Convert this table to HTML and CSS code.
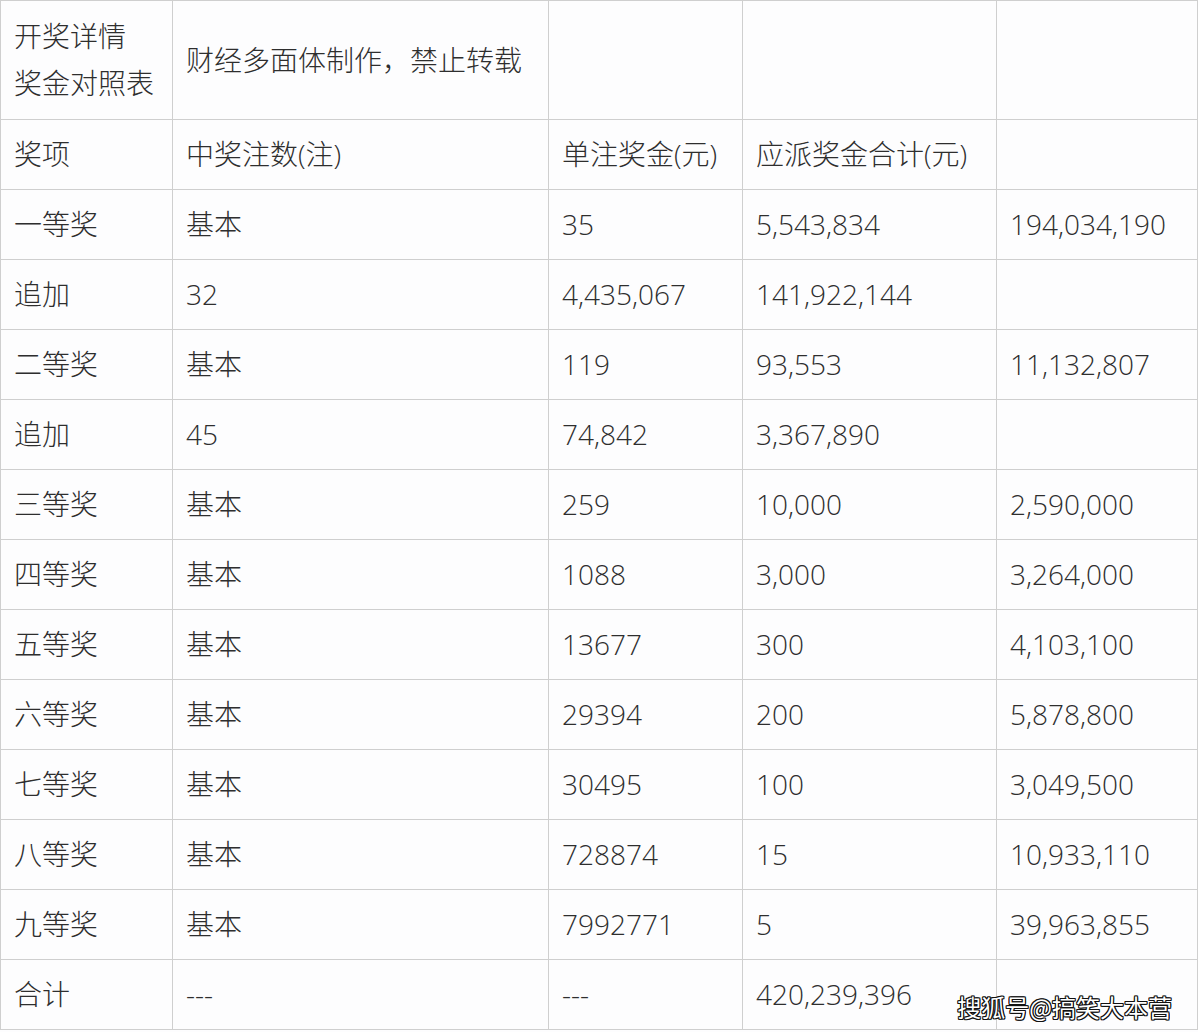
FILE: index.html
```html
<!DOCTYPE html>
<html lang="zh-CN">
<head>
<meta charset="utf-8">
<title>开奖详情</title>
<link rel="stylesheet" href="styles.css">
</head>
<body>
<div class="wrap">
<table class="prize">
  <colgroup>
    <col class="c1"><col class="c2"><col class="c3"><col class="c4"><col class="c5">
  </colgroup>
  <tr class="head">
    <td>开奖详情<br>奖金对照表</td>
    <td>财经多面体制作，禁止转载</td>
    <td></td><td></td><td></td>
  </tr>
  <tr><td>奖项</td><td>中奖注数(注)</td><td>单注奖金(元)</td><td>应派奖金合计(元)</td><td></td></tr>
  <tr><td>一等奖</td><td>基本</td><td>35</td><td>5,543,834</td><td>194,034,190</td></tr>
  <tr><td>追加</td><td>32</td><td>4,435,067</td><td>141,922,144</td><td></td></tr>
  <tr><td>二等奖</td><td>基本</td><td>119</td><td>93,553</td><td>11,132,807</td></tr>
  <tr><td>追加</td><td>45</td><td>74,842</td><td>3,367,890</td><td></td></tr>
  <tr><td>三等奖</td><td>基本</td><td>259</td><td>10,000</td><td>2,590,000</td></tr>
  <tr><td>四等奖</td><td>基本</td><td>1088</td><td>3,000</td><td>3,264,000</td></tr>
  <tr><td>五等奖</td><td>基本</td><td>13677</td><td>300</td><td>4,103,100</td></tr>
  <tr><td>六等奖</td><td>基本</td><td>29394</td><td>200</td><td>5,878,800</td></tr>
  <tr><td>七等奖</td><td>基本</td><td>30495</td><td>100</td><td>3,049,500</td></tr>
  <tr><td>八等奖</td><td>基本</td><td>728874</td><td>15</td><td>10,933,110</td></tr>
  <tr><td>九等奖</td><td>基本</td><td>7992771</td><td>5</td><td>39,963,855</td></tr>
  <tr><td>合计</td><td>---</td><td>---</td><td>420,239,396</td><td></td></tr>
</table>
<div class="watermark">搜狐号@搞笑大本营</div>
</div>
</body>
</html>
```

FILE: styles.css
```css
html, body {
  margin: 0;
  padding: 0;
  background: #fdfdfe;
}
.wrap {
  position: relative;
  width: 1198px;
}
.prize {
  border-collapse: collapse;
  table-layout: fixed;
  width: 1197px;
  font-family: "Open Sans", "Noto Sans CJK SC", sans-serif;
  font-weight: 300;
  font-size: 28px;
  color: #2e2e2e;
  background: #fdfdfe;
}
.c1 { width: 172px; }
.c2 { width: 376px; }
.c3 { width: 194px; }
.c4 { width: 254px; }
.c5 { width: 201px; }
.prize td {
  border: 1px solid #cfcfcf;
  padding: 11px 13px;
  line-height: 47px;
  height: 47px;
  vertical-align: middle;
  white-space: nowrap;
  box-sizing: content-box;
}
.prize tr.head td {
  height: 96px;
}
.watermark {
  position: absolute;
  right: 26px;
  bottom: 8px;
  font-family: "Noto Sans CJK SC", sans-serif;
  font-size: 24px;
  line-height: 30px;
  color: #ffffff;
  text-shadow: 1px 1px 0 #111, -1px -1px 0 #111, 1px -1px 0 #111, -1px 1px 0 #111, 0 1px 0 #111, 1px 0 0 #111, 0 -1px 0 #111, -1px 0 0 #111;
}
```
